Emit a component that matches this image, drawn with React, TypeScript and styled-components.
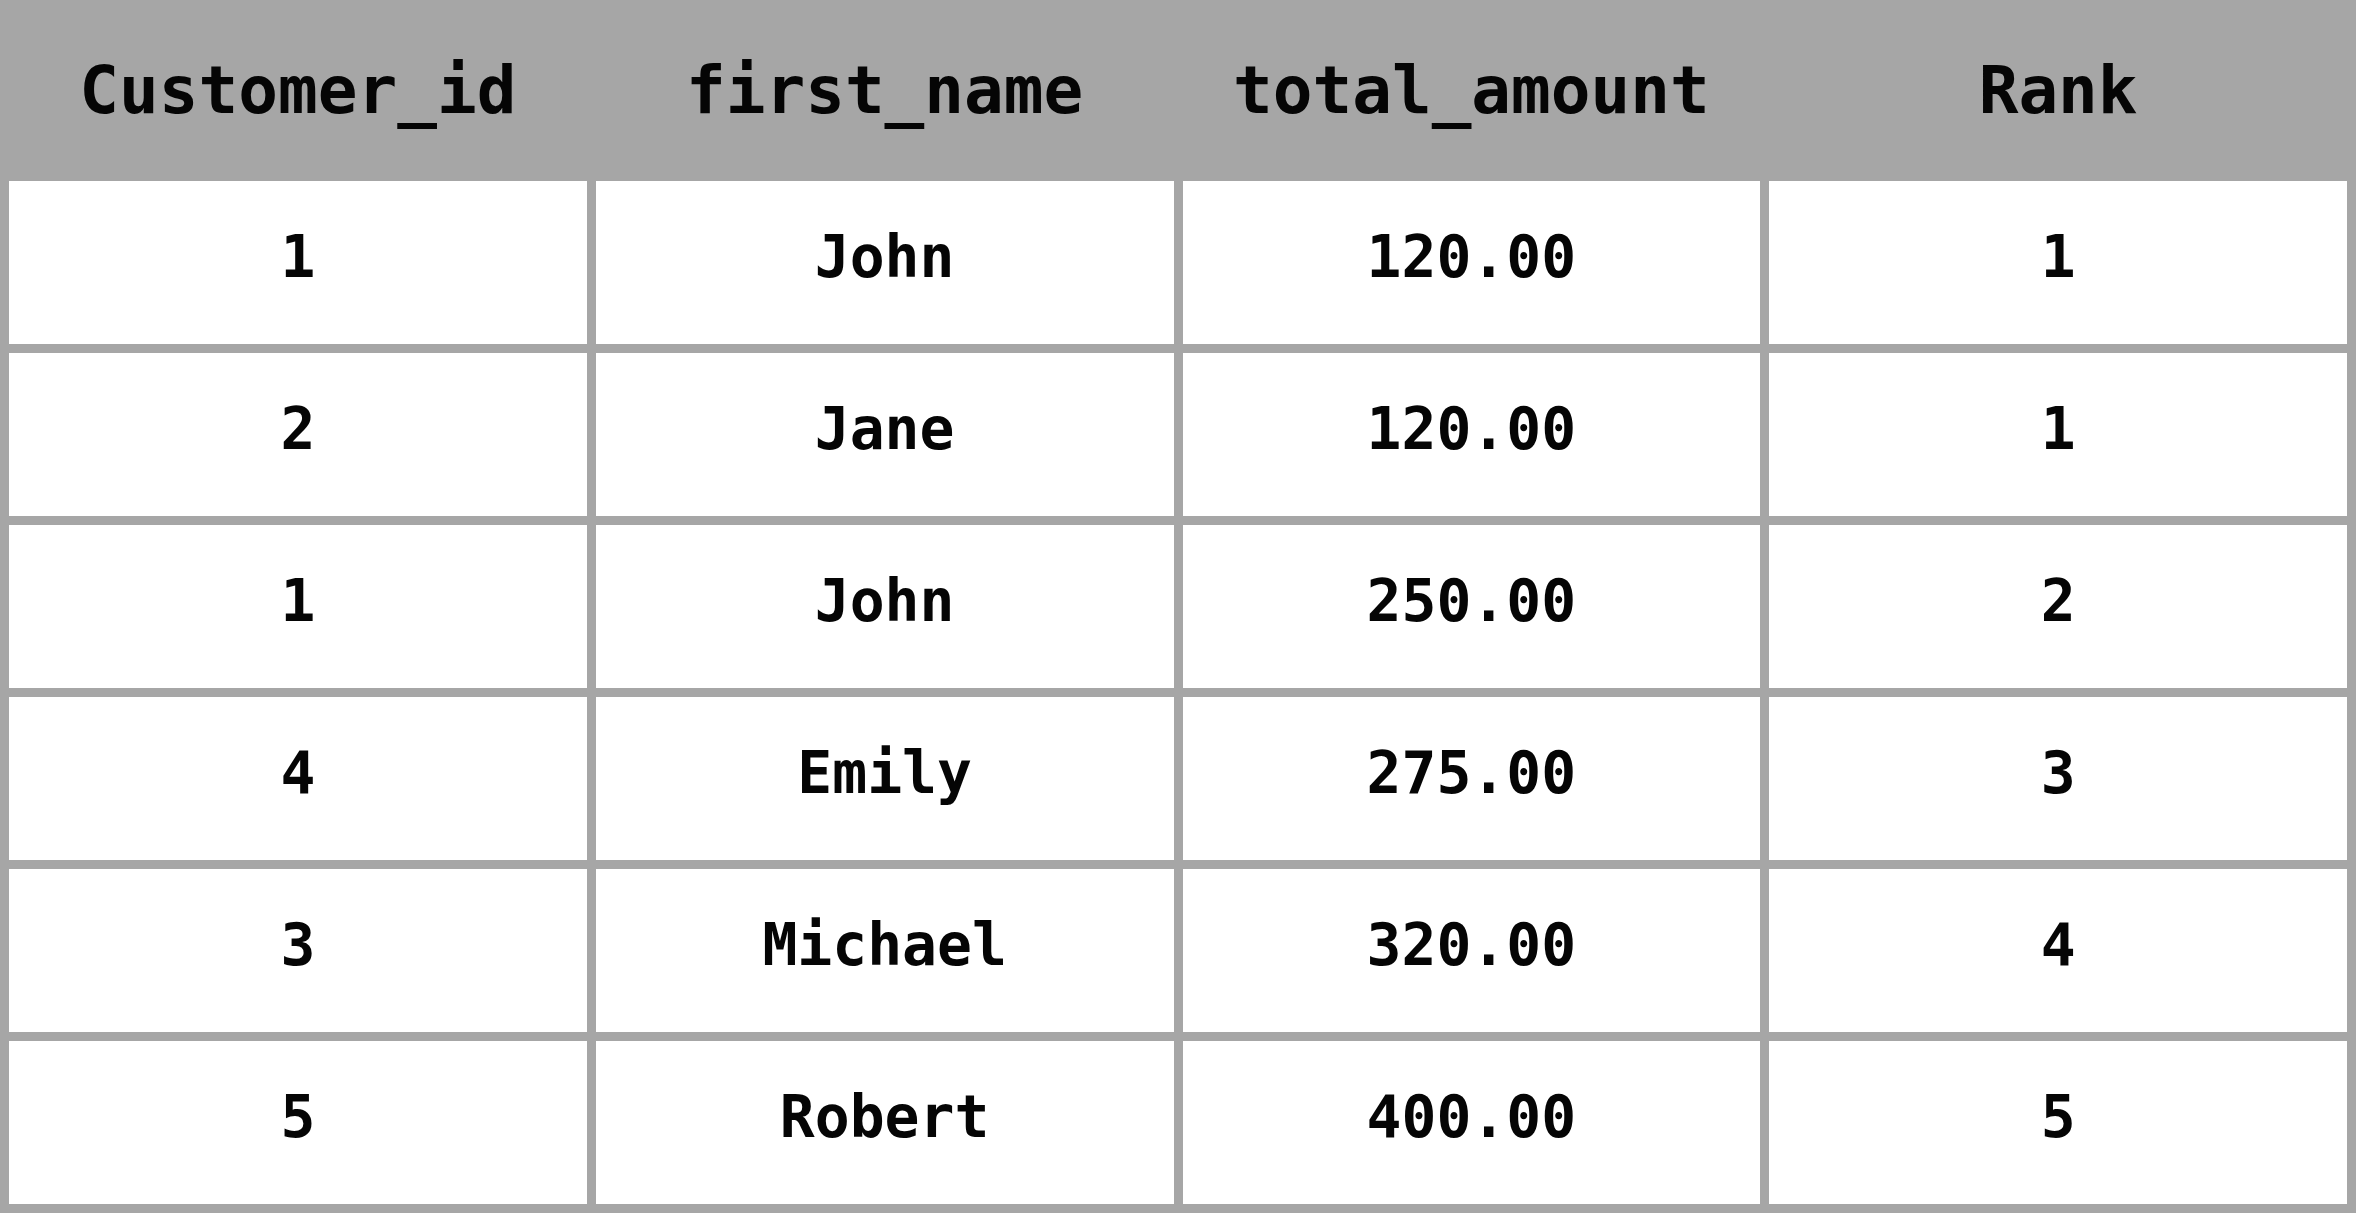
import React from "react";
import styled, { createGlobalStyle } from "styled-components";

const Global = createGlobalStyle`
  html, body { margin: 0; padding: 0; background: #ffffff; }
  #root { width: 2359px; height: 1215px; }
`;

const Table = styled.div`
  width: 2356px;
  height: 1213px;
  box-sizing: border-box;
  display: grid;
  grid-template-columns: repeat(4, 1fr);
  grid-template-rows: repeat(7, 1fr);
  gap: 9px;
  padding: 9px;
  background: #a6a6a6;
  font-family: "DejaVu Sans Mono", "Liberation Mono", monospace;
  font-weight: 700;
  color: #050505;
`;

const Cell = styled.div<{ $head?: boolean }>`
  display: flex;
  align-items: center;
  justify-content: center;
  box-sizing: border-box;
  background: ${(p) => (p.$head ? "transparent" : "#ffffff")};
  font-size: ${(p) => (p.$head ? "66px" : "58px")};
  padding-bottom: ${(p) => (p.$head ? "0" : "12px")};
  line-height: 1;
`;

const headers = ["Customer_id", "first_name", "total_amount", "Rank"];
const rows = [
  ["1", "John", "120.00", "1"],
  ["2", "Jane", "120.00", "1"],
  ["1", "John", "250.00", "2"],
  ["4", "Emily", "275.00", "3"],
  ["3", "Michael", "320.00", "4"],
  ["5", "Robert", "400.00", "5"],
];

export default function App() {
  return (
    <>
      <Global />
      <Table>
        {headers.map((h) => (
          <Cell $head key={h}>{h}</Cell>
        ))}
        {rows.map((r, i) =>
          r.map((c, j) => <Cell key={`${i}-${j}`}>{c}</Cell>)
        )}
      </Table>
    </>
  );
}
